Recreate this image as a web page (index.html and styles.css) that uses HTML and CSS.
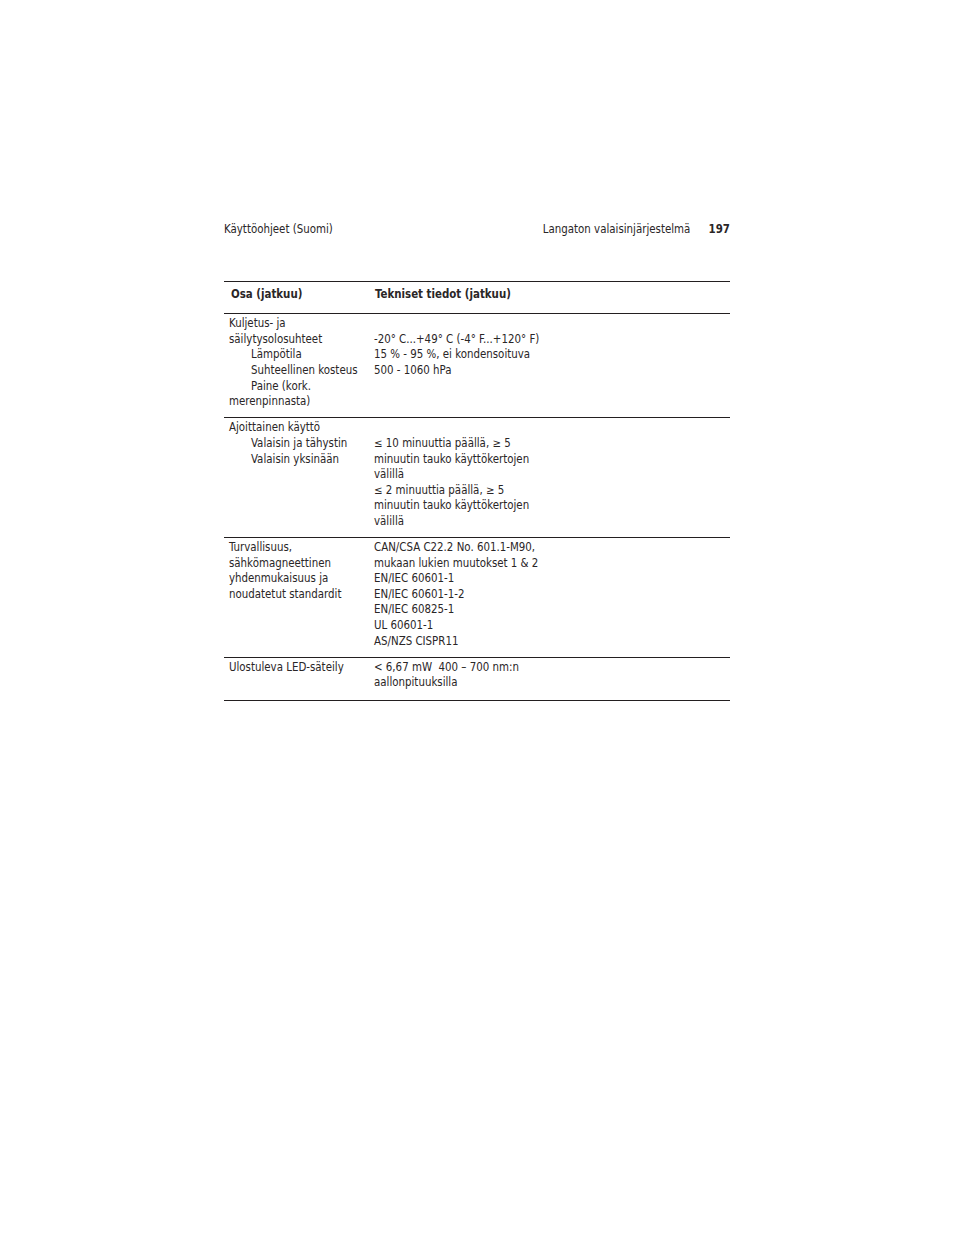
FILE: index.html
```html
<!DOCTYPE html>
<html lang="fi">
<head>
<meta charset="utf-8">
<title>Langaton valaisinjärjestelmä 197</title>
<link rel="stylesheet" href="styles.css">
</head>
<body>
<div class="page">
  <header class="running">
    <span class="left">Käyttöohjeet (Suomi)</span>
    <span class="right">Langaton valaisinjärjestelmä <b class="num">197</b></span>
  </header>
  <table class="spec">
    <thead>
      <tr><th class="c1">Osa (jatkuu)</th><th class="c2">Tekniset tiedot (jatkuu)</th></tr>
    </thead>
    <tbody>
      <tr>
        <td class="c1">Kuljetus- ja<br>säilytysolosuhteet<br><span class="ind">Lämpötila</span><br><span class="ind">Suhteellinen kosteus</span><br><span class="ind">Paine (kork.</span><br>merenpinnasta)</td>
        <td class="c2"><br>-20° C...+49° C (-4° F...+120° F)<br>15 % - 95 %, ei kondensoituva<br>500 - 1060 hPa</td>
      </tr>
      <tr>
        <td class="c1">Ajoittainen käyttö<br><span class="ind">Valaisin ja tähystin</span><br><span class="ind">Valaisin yksinään</span></td>
        <td class="c2"><br>≤ 10 minuuttia päällä, ≥ 5<br>minuutin tauko käyttökertojen<br>välillä<br>≤ 2 minuuttia päällä, ≥ 5<br>minuutin tauko käyttökertojen<br>välillä</td>
      </tr>
      <tr>
        <td class="c1">Turvallisuus,<br>sähkömagneettinen<br>yhdenmukaisuus ja<br>noudatetut standardit</td>
        <td class="c2">CAN/CSA C22.2 No. 601.1-M90,<br>mukaan lukien muutokset 1 &amp; 2<br>EN/IEC 60601-1<br>EN/IEC 60601-1-2<br>EN/IEC 60825-1<br>UL 60601-1<br>AS/NZS CISPR11</td>
      </tr>
      <tr class="last">
        <td class="c1">Ulostuleva LED-säteily</td>
        <td class="c2">&lt; 6,67 mW&nbsp; 400 – 700 nm:n<br>aallonpituuksilla</td>
      </tr>
    </tbody>
  </table>
</div>
</body>
</html>
```
FILE: styles.css
```css
html, body {
  margin: 0;
  padding: 0;
  background: #ffffff;
}
body {
  font-family: "DejaVu Sans Condensed", "Liberation Sans", sans-serif;
  font-size: 11.4px;
  line-height: 15.6px;
  color: #2a2627;
}
.page {
  width: 506px;
  margin-left: 224px;
  padding-top: 222px;
}
.running {
  display: flex;
  justify-content: space-between;
  align-items: baseline;
}
.running .num {
  font-weight: bold;
  margin-left: 15px;
}
.spec {
  width: 100%;
  border-collapse: collapse;
  margin-top: 43px;
  border-top: 1px solid #231f20;
  border-bottom: 1px solid #231f20;
}
.spec th {
  text-align: left;
  font-weight: bold;
  padding: 5px 0 11px 7px;
  border-bottom: 1px solid #231f20;
}
.spec th.c1 { width: 138px; }
.spec td {
  vertical-align: top;
  padding: 2px 0 7.6px 5px;
  border-bottom: 1px solid #231f20;
}
.spec tr.last td { padding-bottom: 9.4px; }
.spec td.c1 { width: 140px; }
.spec th.c2 { padding-left: 6px; }
.ind {
  padding-left: 22px;
}
```
